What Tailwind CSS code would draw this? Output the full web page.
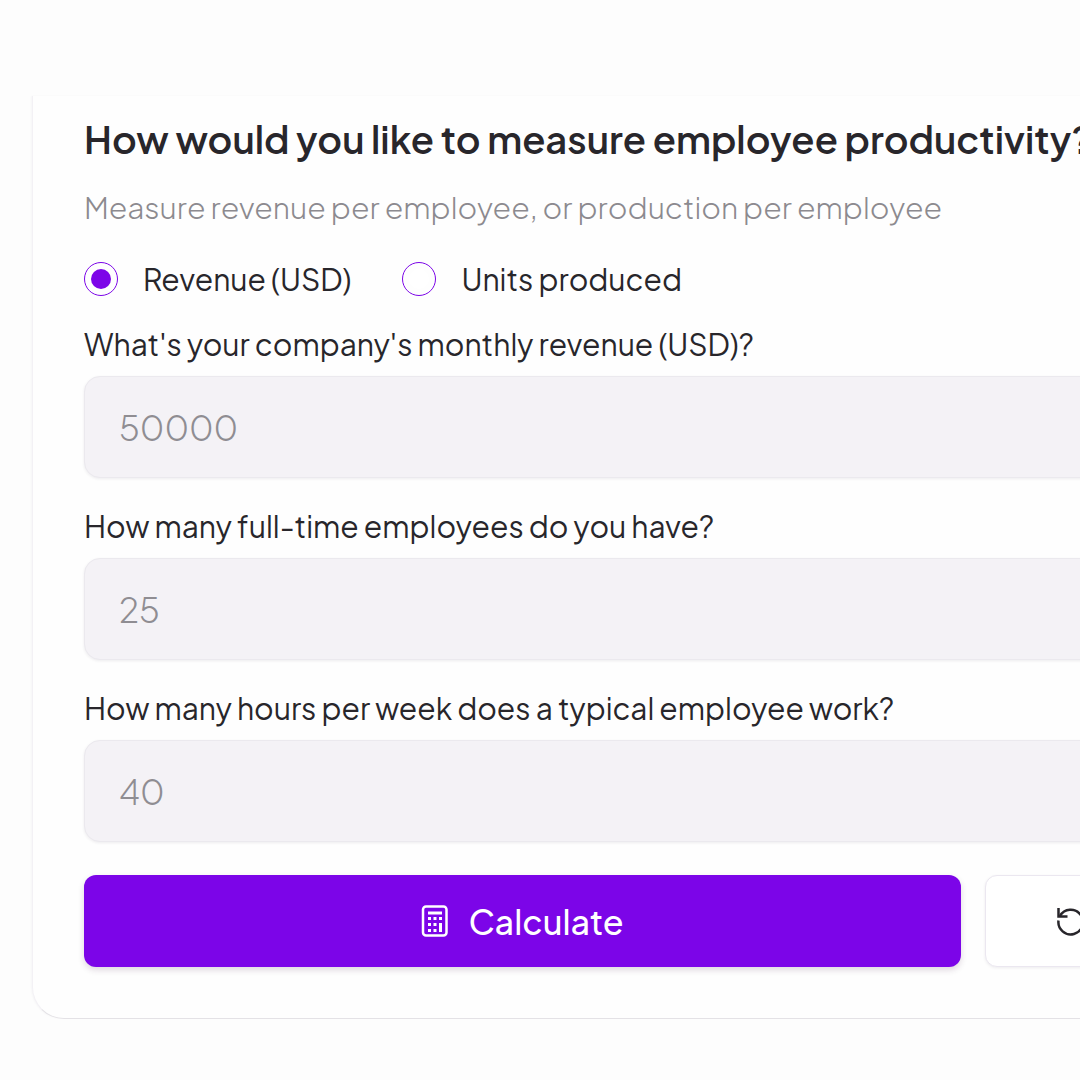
<!DOCTYPE html>
<html lang="en">
<head>
    <meta charset="UTF-8">
    <meta name="viewport" content="width=device-width, initial-scale=1.0">
    <title>Employee Productivity Calculator</title>
    <script src="https://cdn.jsdelivr.net/npm/@tailwindcss/browser@4"></script>
</head>
<body class="overflow-x-hidden bg-[#fdfdfd] font-['Plus_Jakarta_Sans','Inter',sans-serif] text-[#28262b]">
    <!-- card runs past the right edge of the window -->
    <main class="mt-24 -mr-60 ml-8 rounded-bl-[32px] border-b border-l border-b-[#e4e2e6] border-l-[#f3f1f5] bg-[#fefefe] px-[51px] pt-[19px] pb-[51px] shadow-[-1px_0_2px_rgba(40,30,50,0.03)]">
        <form id="calculator">
            <fieldset>
                <legend class="text-[38px] leading-12 font-semibold whitespace-nowrap">How would you like to measure employee productivity?</legend>
                <p class="mt-6 text-[30px] leading-10 font-light text-[#8c8a8f]">Measure revenue per employee, or production per employee</p>
                <div class="mt-8 flex items-center gap-[51px] text-[30px] leading-10">
                    <label class="flex items-center gap-[25px]">
                        <input type="radio" name="measure" value="revenue" checked class="size-[34px] appearance-none rounded-full border border-[#7c05e8] bg-white bg-clip-content p-[6px] checked:bg-[#7c05e8]">
                        Revenue (USD)
                    </label>
                    <label class="flex items-center gap-[25px]">
                        <input type="radio" name="measure" value="units" class="size-[34px] appearance-none rounded-full border border-[#7c05e8] bg-white bg-clip-content p-[6px] checked:bg-[#7c05e8]">
                        Units produced
                    </label>
                </div>
            </fieldset>

            <div class="mt-[25px]">
                <label for="revenue" class="block text-[30px] leading-10">What's your company's monthly revenue (USD)?</label>
                <input id="revenue" type="text" inputmode="numeric" placeholder="50000" class="mt-3 block h-[102px] w-full rounded-2xl border border-[#ebe9ee] bg-[#f4f2f6] px-[34px] text-[34px] font-light shadow-[0_1px_3px_rgba(40,30,50,0.08)] placeholder:text-[#8f8d92]">
            </div>
            <div class="mt-7">
                <label for="employees" class="block text-[30px] leading-10">How many full-time employees do you have?</label>
                <input id="employees" type="text" inputmode="numeric" placeholder="25" class="mt-3 block h-[102px] w-full rounded-2xl border border-[#ebe9ee] bg-[#f4f2f6] px-[34px] text-[34px] font-light shadow-[0_1px_3px_rgba(40,30,50,0.08)] placeholder:text-[#8f8d92]">
            </div>
            <div class="mt-7">
                <label for="hours" class="block text-[30px] leading-10">How many hours per week does a typical employee work?</label>
                <input id="hours" type="text" inputmode="numeric" placeholder="40" class="mt-3 block h-[102px] w-full rounded-2xl border border-[#ebe9ee] bg-[#f4f2f6] px-[34px] text-[34px] font-light shadow-[0_1px_3px_rgba(40,30,50,0.08)] placeholder:text-[#8f8d92]">
            </div>

            <div class="mt-[33px] flex gap-6">
                <button type="submit" class="flex h-[92px] flex-1 items-center justify-center gap-5 rounded-xl bg-[#7c05e8] text-[34px] font-medium text-white shadow-[0_3px_6px_rgba(60,20,60,0.16)]">
                    <svg class="h-8 w-[27px]" viewBox="0 0 27 32" fill="none" stroke="currentColor" aria-hidden="true">
                        <rect x="2" y="1.5" width="23.5" height="29" rx="3" stroke-width="2.5"/>
                        <path d="M7 8h14" stroke-width="3"/>
                        <path d="M7 13.5h3M12.5 13.5h3M18 13.5h3M7 19.5h3M12.5 19.5h3M7 25.5h3M12.5 25.5h3" stroke-width="3"/>
                        <path d="M19.5 18v9" stroke-width="3"/>
                    </svg>
                    Calculate
                </button>
                <button type="reset" class="flex h-[92px] w-[284px] items-center justify-center gap-5 rounded-xl border border-[#ebe7f0] bg-white text-[34px] font-medium shadow-[0_1px_3px_rgba(40,30,50,0.08)]">
                    <svg class="size-[29px]" viewBox="0 0 29 29" fill="none" stroke="currentColor" stroke-width="2.5" aria-hidden="true">
                        <path d="M2.5 1v8.500h9"/>
                        <path d="M4 9A12.3 12.3 0 1 1 2.500 13.500"/>
                    </svg>
                    Reset
                </button>
            </div>
        </form>
    </main>
</body>
</html>
